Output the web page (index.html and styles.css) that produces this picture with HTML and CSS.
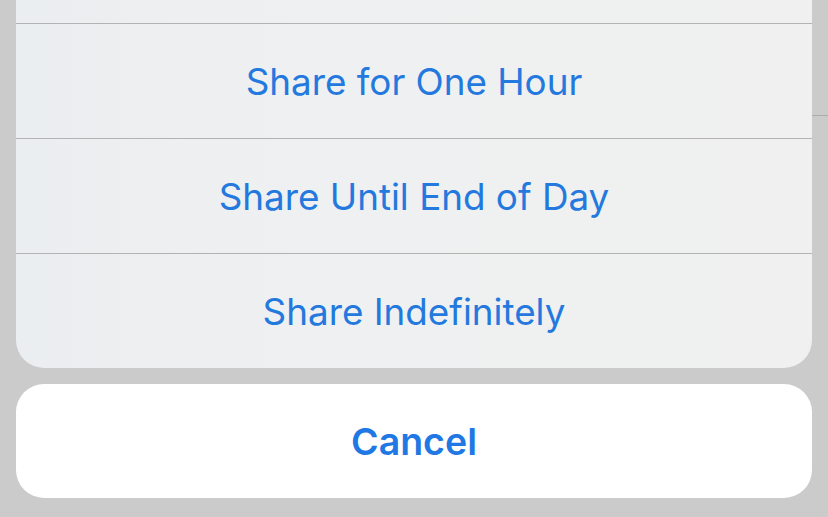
FILE: index.html
```html
<!DOCTYPE html>
<html lang="en">
<head>
    <meta charset="UTF-8">
    <meta name="viewport" content="width=device-width, initial-scale=1.0">
    <title>Share My Location</title>
    <link rel="stylesheet" href="styles.css">
</head>
<body>
    <div class="action-sheet">
        <!-- Options group -->
        <div class="sheet-group">
            <div class="sheet-row sheet-title"></div>
            <div class="sheet-row" onclick="pick('hour')">Share for One Hour</div>
            <div class="sheet-row" onclick="pick('day')">Share Until End of Day</div>
            <div class="sheet-row" onclick="pick('forever')">Share Indefinitely</div>
        </div>

        <!-- Cancel -->
        <div class="sheet-cancel" onclick="pick(null)">Cancel</div>
    </div>

    <script>
        function pick(option) {
            console.log('share option:', option);
        }
    </script>
</body>
</html>
```

FILE: styles.css
```css
* {
    margin: 0;
    padding: 0;
    box-sizing: border-box;
}

html, body {
    height: 100%;
}

body {
    font-family: Inter, "Liberation Sans", Arial, sans-serif;
    background-color: #cbcbcb;
    /* faint divider of the list behind the sheet, right edge only */
    background-image: linear-gradient(#acacac, #acacac);
    background-repeat: no-repeat;
    background-size: 16px 1px;
    background-position: right 0 top 115px;
    overflow: hidden;
}

.action-sheet {
    padding: 0 16px;
    display: flex;
    flex-direction: column;
    gap: 16px;
}

/* Options group */
.sheet-group {
    background: linear-gradient(90deg, #ebeef0 0%, #eff0f1 40%, #f0f0f0 100%);
    border-radius: 0 0 28px 28px;
    overflow: hidden;
}

.sheet-row {
    height: 115px;
    border-bottom: 1px solid #b3b3b3;
    display: flex;
    align-items: center;
    justify-content: center;
    font-size: 36.8px;
    color: #2479de;
    cursor: pointer;
}

.sheet-row:last-child {
    height: 114px;
    border-bottom: none;
}

.sheet-title {
    height: 24px;
    cursor: default;
}

/* Cancel */
.sheet-cancel {
    height: 114px;
    background: #fff;
    border-radius: 28px;
    display: flex;
    align-items: center;
    justify-content: center;
    font-size: 37.5px;
    font-weight: 600;
    color: #1f78e3;
    cursor: pointer;
}
```
